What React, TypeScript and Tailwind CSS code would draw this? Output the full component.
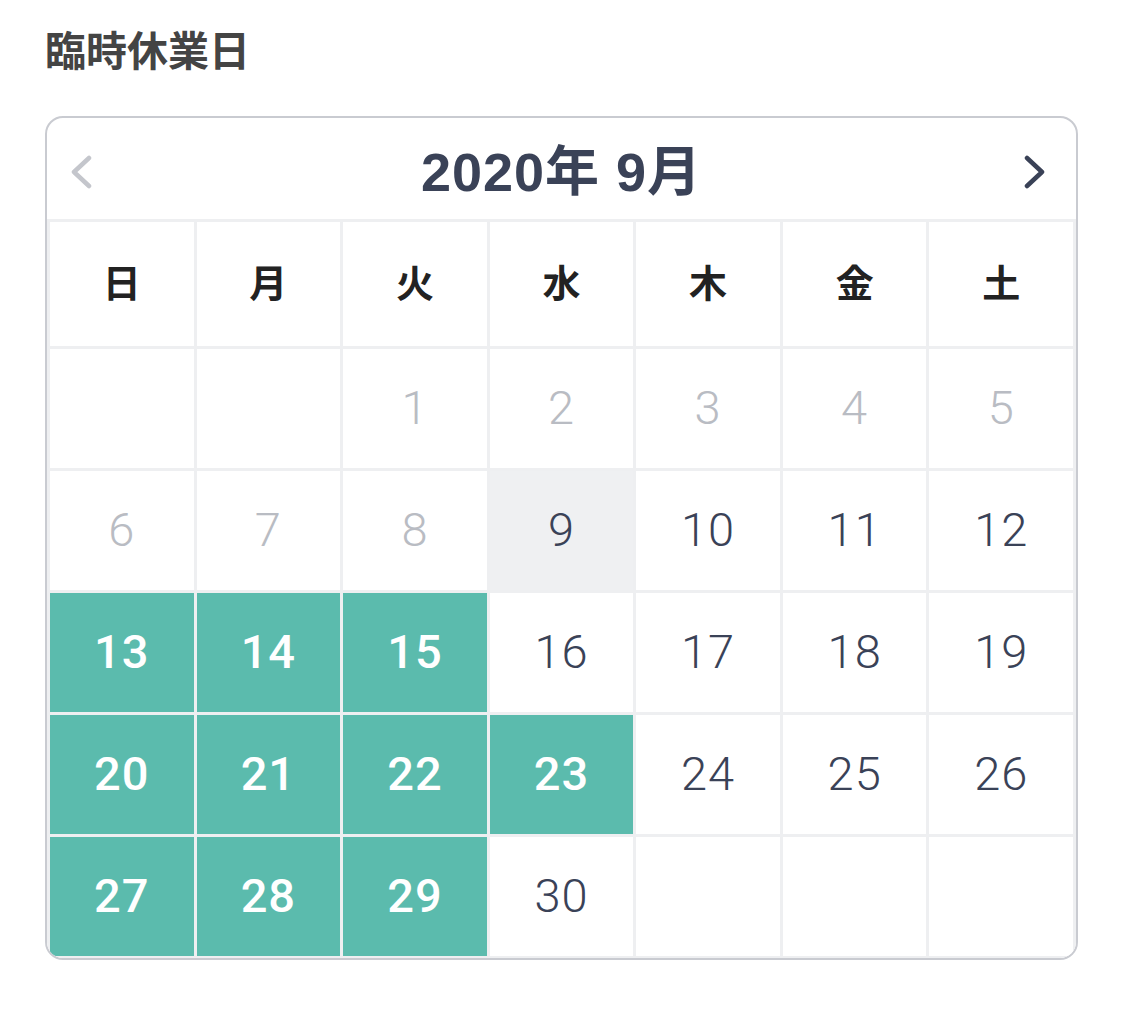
import React from "react";

const FONT = '"Liberation Sans", "Noto Sans CJK JP", sans-serif';
const NUM = 'Roboto, "Noto Sans CJK JP", sans-serif';

type Cell = { d: number | null; kind: "empty" | "past" | "today" | "normal" | "closed" };

const closed = new Set([13, 14, 15, 20, 21, 22, 23, 27, 28, 29]);

function buildCells(): Cell[] {
  const cells: Cell[] = [];
  for (let i = 0; i < 2; i++) cells.push({ d: null, kind: "empty" });
  for (let d = 1; d <= 30; d++) {
    let kind: Cell["kind"] = "normal";
    if (d < 9) kind = "past";
    else if (d === 9) kind = "today";
    else if (closed.has(d)) kind = "closed";
    cells.push({ d, kind });
  }
  while (cells.length < 35) cells.push({ d: null, kind: "empty" });
  return cells;
}

const weekdays = ["日", "月", "火", "水", "木", "金", "土"];

export default function App() {
  const cells = buildCells();
  return (
    <div className="min-h-screen bg-white px-[45px] pt-[28px]" style={{ fontFamily: FONT }}>
      <h1 className="text-[41px] leading-[48px] font-bold text-[#444444]">臨時休業日</h1>
      <div className="mt-[40px] w-[1033px] border-2 border-[#c9cbd1] rounded-[18px] overflow-hidden bg-white">
        <div className="h-[101px] flex items-center justify-between px-[22px] pt-[6px]">
          <svg width="30" height="34" viewBox="0 0 30 34" fill="none">
            <polyline points="20,3 5,17 20,31" stroke="#c4c6cc" strokeWidth="4.5" strokeLinecap="round" strokeLinejoin="round" />
          </svg>
          <div className="text-[54px] leading-none font-bold text-[#3a4257] tracking-[1px]">2020年 9月</div>
          <svg width="30" height="34" viewBox="0 0 30 34" fill="none">
            <polyline points="3,3 18,17 3,31" stroke="#3a4257" strokeWidth="4.5" strokeLinecap="round" strokeLinejoin="round" />
          </svg>
        </div>
        <div className="grid grid-cols-7 gap-[3px] bg-[#eeeff1] p-[3px] pb-[2px]">
          {weekdays.map((w) => (
            <div key={w} className="h-[124px] bg-white flex items-center justify-center text-[38px] font-bold text-[#222222]">
              {w}
            </div>
          ))}
          {cells.map((c, i) => {
            let cls = "bg-white";
            let txt = "";
            if (c.kind === "past") { cls = "bg-white"; txt = "text-[#b9bcc3] font-light"; }
            if (c.kind === "today") { cls = "bg-[#eff0f2]"; txt = "text-[#3a4257] font-light"; }
            if (c.kind === "normal") { cls = "bg-white"; txt = "text-[#3a4257] font-light"; }
            if (c.kind === "closed") { cls = "bg-[#5bbbad]"; txt = "text-white font-medium"; }
            return (
              <div
                key={i}
                className={`h-[119px] flex items-center justify-center text-[47px] tracking-[1px] ${cls} ${txt}`}
                style={{ fontFamily: NUM }}
              >
                {c.d ?? ""}
              </div>
            );
          })}
        </div>
      </div>
    </div>
  );
}
